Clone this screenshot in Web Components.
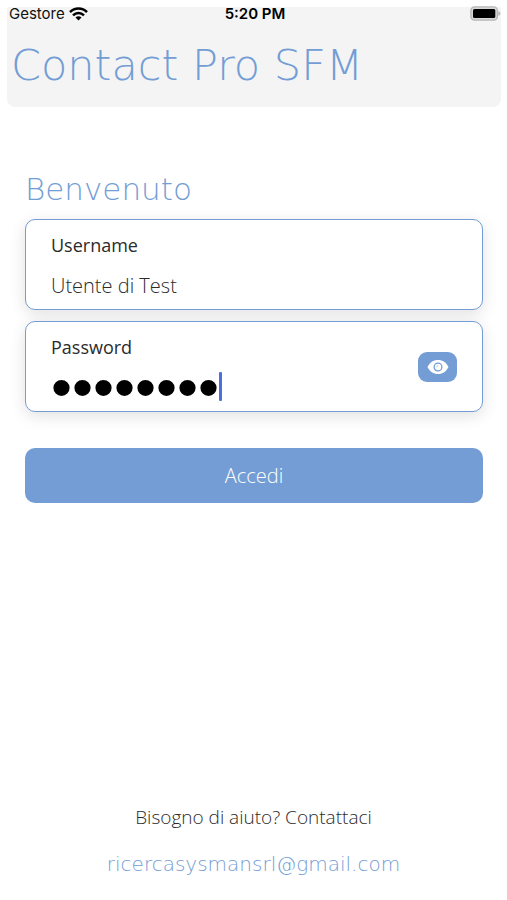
<!DOCTYPE html>
<html lang="it">
<head>
<meta charset="utf-8">
<meta name="viewport" content="width=device-width, initial-scale=1">
<title>Contact Pro SFM</title>
<style>
:root { --blue: #739dd4; --ink: #2b2b2b; --ui: "Open Sans", "Noto Sans", sans-serif;
  --wide: "DejaVu Sans Light", "DejaVu Sans", sans-serif; }
body { margin: 0; background: #fff; color: var(--ink); font-family: var(--ui); font-weight: 300; }
</style>
</head>
<body>
<login-page></login-page>
<script>
class BaseElement extends HTMLElement {
  render(html) {
    this.attachShadow({ mode: "open" }).innerHTML =
      "<style>*{box-sizing:border-box}:host{box-sizing:border-box;display:block}</style>" + html;
  }
}

customElements.define("status-bar", class extends BaseElement {
  constructor() {
    super();
    this.render(`
<style>
:host { display: grid; grid-template-columns: 1fr auto 1fr; align-items: center; height: 27px; padding: 0 6px 0 9px;
  font: 400 15px/20px Inter, "Liberation Sans", sans-serif; color: #111; }
.carrier { display: flex; align-items: center; gap: 4px; }
.time { font-weight: 600; color: #000; }
.battery { justify-self: end; }
svg { display: block; }
</style>
<span class="carrier"><span>Gestore</span>
<svg width="19" height="14" viewBox="0 0 19 14" fill="none" stroke="#000" stroke-width="2.5" aria-hidden="true">
<path d="M1 5.1C5.700 .2 13.300 .2 18 5.100M4 8.300C7.200 5.200 11.800 5.200 15 8.300"/>
<path d="M6.500 10.400C8.200 8.700 10.800 8.700 12.500 10.400L9.500 13.500Z" fill="#000" stroke="none"/></svg></span>
<span class="time">5:20 PM</span>
<svg class="battery" width="31" height="15" viewBox="0 0 31 15" aria-hidden="true">
<rect x=".9" y=".9" width="26.500" height="13.200" rx="3.600" fill="#d8d8d8" stroke="#b5b5b5" stroke-width="1.300"/>
<rect x="3" y="3" width="22.300" height="9" rx="1.500" fill="#000"/>
<path d="M28.400 5Q30.400 6 30.400 7.500T28.400 10Z" fill="#b5b5b5"/></svg>`);
  }
});

customElements.define("app-header", class extends BaseElement {
  constructor() {
    super();
    this.render(`
<style>
:host { margin: 7px 6px 0 7px; padding: 34px 4px 18px; background: #f4f4f4; border-radius: 2px 2px 8px 8px; }
h1 { margin: 0; font: 200 43px/48px var(--wide); color: var(--blue); white-space: nowrap; }
</style>
<h1><slot></slot></h1>`);
  }
});

customElements.define("field-card", class extends BaseElement {
  constructor() {
    super();
    const type = this.getAttribute("type") || "text";
    const secret = type === "password";
    this.render(`
<style>
:host { height: 91px; padding: 0 25px; background: #fff; border: 1px solid var(--blue); border-radius: 10px;
  box-shadow: 0 4px 16px rgba(0,0,0,.12); display: flex; align-items: center; gap: 16px; }
.body { flex: 1; min-width: 0; align-self: flex-start; padding-top: 13px; display: flex; flex-direction: column; gap: 7px; }
label { font-size: 18px; line-height: 24px; font-weight: 400; color: #2b2b2b; }
.control { position: relative; height: 42px; display: flex; align-items: center; }
input { width: 100%; height: 42px; padding: 0; border: 0; outline: 0; background: none; color: var(--ink);
  font: 300 20px/28px var(--ui); }
input[type=password] { font: 60px/42px "Liberation Sans", sans-serif; color: #000; }
.caret { position: absolute; left: 168px; top: 6px; width: 3px; height: 29px; border-radius: 1px; background: #4c6fdc; }
</style>
<div class="body">
<label for="control">${this.getAttribute("label")}</label>
<div class="control"><input id="control" type="${type}" value="${this.getAttribute("value")}">${secret ? '<span class="caret"></span>' : ""}</div>
</div>
<slot name="action"></slot>`);
  }
});

customElements.define("reveal-button", class extends BaseElement {
  constructor() {
    super();
    this.render(`
<style>
:host { flex: none; }
button { display: grid; place-items: center; width: 39px; height: 30px; padding: 0; border: 0; border-radius: 9px; background: var(--blue); }
svg { display: block; }
</style>
<button type="button" aria-label="Mostra password">
<svg width="22" height="16" viewBox="0 0 22 16" aria-hidden="true">
<path d="M.5 8C2.700 3.500 6.300 1 11 1S19.300 3.500 21.500 8C19.300 12.500 15.700 15 11 15S2.700 12.500 .5 8Z" fill="#fff"/>
<circle cx="11" cy="8" r="3.900" fill="#fff" stroke="#739dd4" stroke-width="1.300"/>
<path d="M9 8A2 2 0 0 0 11 6" fill="none" stroke="#b9cdea" stroke-width=".8"/></svg>
</button>`);
  }
});

customElements.define("primary-button", class extends BaseElement {
  constructor() {
    super();
    this.render(`
<style>
button { width: 100%; height: 55px; border: 0; border-radius: 10px; background: var(--blue); color: #fff; font: 300 20px/28px var(--ui); }
</style>
<button type="button"><slot></slot></button>`);
  }
});

customElements.define("help-footer", class extends BaseElement {
  constructor() {
    super();
    this.render(`
<style>
:host { display: flex; flex-direction: column; align-items: center; gap: 19px; padding-bottom: 22px; }
p { margin: 0; font-size: 19px; line-height: 28px; }
a { font: 200 20px/28px var(--wide); color: var(--blue); text-decoration: none; }
</style>
<p>Bisogno di aiuto? Contattaci</p>
<a href="mailto:ricercasysmansrl@gmail.com">ricercasysmansrl@gmail.com</a>`);
  }
});

customElements.define("login-page", class extends BaseElement {
  constructor() {
    super();
    this.render(`
<style>
:host { position: relative; display: flex; flex-direction: column; min-height: 100vh; }
status-bar { position: absolute; top: 0; left: 0; right: 0; }
main { padding: 63px 24px 0 25px; }
h2 { margin: 0 0 11px; font: 200 31px/38px var(--wide); color: var(--blue); }
form { display: flex; flex-direction: column; gap: 11px; }
primary-button { margin-top: 25px; }
help-footer { margin-top: auto; }
</style>
<app-header>Contact Pro SFM</app-header>
<status-bar></status-bar>
<main>
<h2>Benvenuto</h2>
<form>
<field-card label="Username" value="Utente di Test"></field-card>
<field-card label="Password" type="password" value="password"><reveal-button slot="action"></reveal-button></field-card>
<primary-button>Accedi</primary-button>
</form>
</main>
<help-footer></help-footer>`);
  }
});
</script>
</body>
</html>
